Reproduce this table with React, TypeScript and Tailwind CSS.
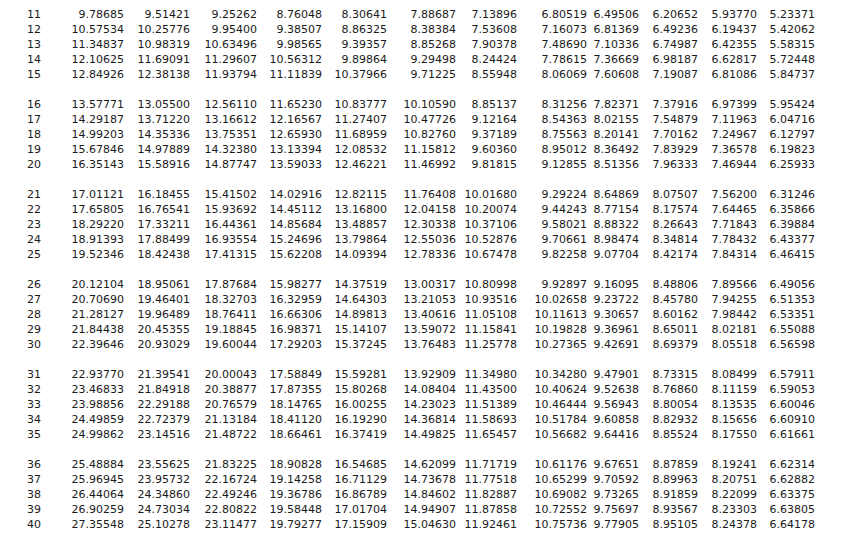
import React from "react";

const groups: string[][][] = [
  [
    ["11", "9.78685", "9.51421", "9.25262", "8.76048", "8.30641", "7.88687", "7.13896", "6.80519", "6.49506", "6.20652", "5.93770", "5.23371"],
    ["12", "10.57534", "10.25776", "9.95400", "9.38507", "8.86325", "8.38384", "7.53608", "7.16073", "6.81369", "6.49236", "6.19437", "5.42062"],
    ["13", "11.34837", "10.98319", "10.63496", "9.98565", "9.39357", "8.85268", "7.90378", "7.48690", "7.10336", "6.74987", "6.42355", "5.58315"],
    ["14", "12.10625", "11.69091", "11.29607", "10.56312", "9.89864", "9.29498", "8.24424", "7.78615", "7.36669", "6.98187", "6.62817", "5.72448"],
    ["15", "12.84926", "12.38138", "11.93794", "11.11839", "10.37966", "9.71225", "8.55948", "8.06069", "7.60608", "7.19087", "6.81086", "5.84737"],
  ],
  [
    ["16", "13.57771", "13.05500", "12.56110", "11.65230", "10.83777", "10.10590", "8.85137", "8.31256", "7.82371", "7.37916", "6.97399", "5.95424"],
    ["17", "14.29187", "13.71220", "13.16612", "12.16567", "11.27407", "10.47726", "9.12164", "8.54363", "8.02155", "7.54879", "7.11963", "6.04716"],
    ["18", "14.99203", "14.35336", "13.75351", "12.65930", "11.68959", "10.82760", "9.37189", "8.75563", "8.20141", "7.70162", "7.24967", "6.12797"],
    ["19", "15.67846", "14.97889", "14.32380", "13.13394", "12.08532", "11.15812", "9.60360", "8.95012", "8.36492", "7.83929", "7.36578", "6.19823"],
    ["20", "16.35143", "15.58916", "14.87747", "13.59033", "12.46221", "11.46992", "9.81815", "9.12855", "8.51356", "7.96333", "7.46944", "6.25933"],
  ],
  [
    ["21", "17.01121", "16.18455", "15.41502", "14.02916", "12.82115", "11.76408", "10.01680", "9.29224", "8.64869", "8.07507", "7.56200", "6.31246"],
    ["22", "17.65805", "16.76541", "15.93692", "14.45112", "13.16800", "12.04158", "10.20074", "9.44243", "8.77154", "8.17574", "7.64465", "6.35866"],
    ["23", "18.29220", "17.33211", "16.44361", "14.85684", "13.48857", "12.30338", "10.37106", "9.58021", "8.88322", "8.26643", "7.71843", "6.39884"],
    ["24", "18.91393", "17.88499", "16.93554", "15.24696", "13.79864", "12.55036", "10.52876", "9.70661", "8.98474", "8.34814", "7.78432", "6.43377"],
    ["25", "19.52346", "18.42438", "17.41315", "15.62208", "14.09394", "12.78336", "10.67478", "9.82258", "9.07704", "8.42174", "7.84314", "6.46415"],
  ],
  [
    ["26", "20.12104", "18.95061", "17.87684", "15.98277", "14.37519", "13.00317", "10.80998", "9.92897", "9.16095", "8.48806", "7.89566", "6.49056"],
    ["27", "20.70690", "19.46401", "18.32703", "16.32959", "14.64303", "13.21053", "10.93516", "10.02658", "9.23722", "8.45780", "7.94255", "6.51353"],
    ["28", "21.28127", "19.96489", "18.76411", "16.66306", "14.89813", "13.40616", "11.05108", "10.11613", "9.30657", "8.60162", "7.98442", "6.53351"],
    ["29", "21.84438", "20.45355", "19.18845", "16.98371", "15.14107", "13.59072", "11.15841", "10.19828", "9.36961", "8.65011", "8.02181", "6.55088"],
    ["30", "22.39646", "20.93029", "19.60044", "17.29203", "15.37245", "13.76483", "11.25778", "10.27365", "9.42691", "8.69379", "8.05518", "6.56598"],
  ],
  [
    ["31", "22.93770", "21.39541", "20.00043", "17.58849", "15.59281", "13.92909", "11.34980", "10.34280", "9.47901", "8.73315", "8.08499", "6.57911"],
    ["32", "23.46833", "21.84918", "20.38877", "17.87355", "15.80268", "14.08404", "11.43500", "10.40624", "9.52638", "8.76860", "8.11159", "6.59053"],
    ["33", "23.98856", "22.29188", "20.76579", "18.14765", "16.00255", "14.23023", "11.51389", "10.46444", "9.56943", "8.80054", "8.13535", "6.60046"],
    ["34", "24.49859", "22.72379", "21.13184", "18.41120", "16.19290", "14.36814", "11.58693", "10.51784", "9.60858", "8.82932", "8.15656", "6.60910"],
    ["35", "24.99862", "23.14516", "21.48722", "18.66461", "16.37419", "14.49825", "11.65457", "10.56682", "9.64416", "8.85524", "8.17550", "6.61661"],
  ],
  [
    ["36", "25.48884", "23.55625", "21.83225", "18.90828", "16.54685", "14.62099", "11.71719", "10.61176", "9.67651", "8.87859", "8.19241", "6.62314"],
    ["37", "25.96945", "23.95732", "22.16724", "19.14258", "16.71129", "14.73678", "11.77518", "10.65299", "9.70592", "8.89963", "8.20751", "6.62882"],
    ["38", "26.44064", "24.34860", "22.49246", "19.36786", "16.86789", "14.84602", "11.82887", "10.69082", "9.73265", "8.91859", "8.22099", "6.63375"],
    ["39", "26.90259", "24.73034", "22.80822", "19.58448", "17.01704", "14.94907", "11.87858", "10.72552", "9.75697", "8.93567", "8.23303", "6.63805"],
    ["40", "27.35548", "25.10278", "23.11477", "19.79277", "17.15909", "15.04630", "11.92461", "10.75736", "9.77905", "8.95105", "8.24378", "6.64178"],
  ],
];

const colClasses = [
  "w-[57px]",
  "w-[66px]",
  "w-[67px]",
  "w-[65px]",
  "w-[65px]",
  "w-[69px]",
  "w-[61px]",
  "w-[70px]",
  "w-[52px]",
  "w-[59px]",
  "w-[59px]",
  "w-[58px]",
];

export default function App() {
  return (
    <div
      className="w-[850px] h-[546px] bg-white text-[#1a1a1a] text-[11px] leading-[15px] pt-[7px] pl-[27px] overflow-hidden"
      style={{ fontFamily: '"DejaVu Sans", sans-serif' }}
    >
      {groups.map((g, gi) => (
        <div key={gi} className="mb-[15px]">
          {g.map((row) => (
            <div key={row[0]} className="flex h-[15px] whitespace-nowrap">
              <div className="w-[40px] text-left">{row[0]}</div>
              {row.slice(1).map((v, i) => (
                <div key={i} className={`${colClasses[i]} text-right`}>
                  {v}
                </div>
              ))}
            </div>
          ))}
        </div>
      ))}
    </div>
  );
}
